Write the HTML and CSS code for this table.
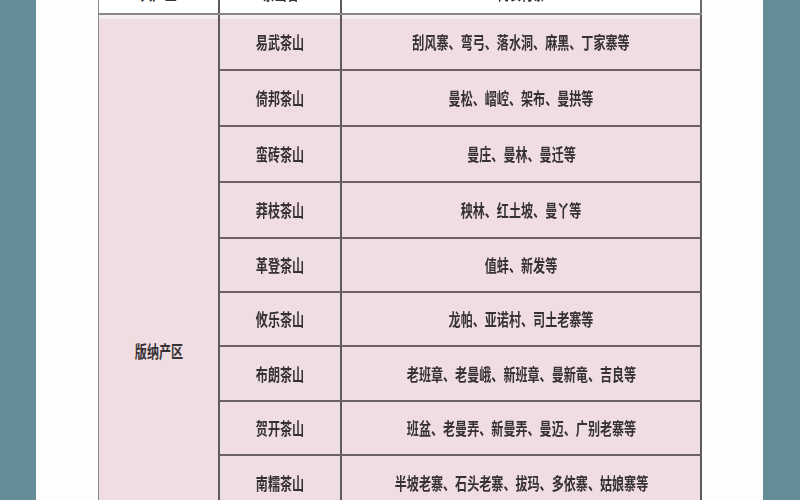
FILE: index.html
```html
<!DOCTYPE html>
<html lang="zh">
<head>
<meta charset="utf-8">
<title>版纳产区茶山</title>
<link rel="stylesheet" href="styles.css">
</head>
<body>
<div class="page">
  <table class="tea">
    <thead>
      <tr>
        <th class="c1"><span class="t">大产区</span></th>
        <th class="c2"><span class="t">茶山名</span></th>
        <th class="c3"><span class="t">代表村寨</span></th>
      </tr>
    </thead>
    <tbody>
      <tr class="first h56">
        <td class="region" rowspan="12"><span class="t">版纳产区</span></td>
        <td><span class="t">易武茶山</span></td>
        <td><span class="t">刮风寨、弯弓、落水洞、麻黑、丁家寨等</span></td>
      </tr>
      <tr class="h56">
        <td><span class="t">倚邦茶山</span></td>
        <td><span class="t">曼松、嶍崆、架布、曼拱等</span></td>
      </tr>
      <tr class="h56">
        <td><span class="t">蛮砖茶山</span></td>
        <td><span class="t">曼庄、曼林、曼迁等</span></td>
      </tr>
      <tr class="h56">
        <td><span class="t">莽枝茶山</span></td>
        <td><span class="t">秧林、红土坡、曼丫等</span></td>
      </tr>
      <tr class="h54">
        <td><span class="t">革登茶山</span></td>
        <td><span class="t">值蚌、新发等</span></td>
      </tr>
      <tr class="h54">
        <td><span class="t">攸乐茶山</span></td>
        <td><span class="t">龙帕、亚诺村、司土老寨等</span></td>
      </tr>
      <tr class="h55">
        <td><span class="t">布朗茶山</span></td>
        <td><span class="t">老班章、老曼峨、新班章、曼新竜、吉良等</span></td>
      </tr>
      <tr class="h54">
        <td><span class="t">贺开茶山</span></td>
        <td><span class="t">班盆、老曼弄、新曼弄、曼迈、广别老寨等</span></td>
      </tr>
      <tr class="h56">
        <td><span class="t">南糯茶山</span></td>
        <td><span class="t">半坡老寨、石头老寨、拔玛、多依寨、姑娘寨等</span></td>
      </tr>
      <tr class="h55">
        <td><span class="t">南峤茶山</span></td>
        <td><span class="t">曼糯、曼真等</span></td>
      </tr>
      <tr class="h55">
        <td><span class="t">勐宋茶山</span></td>
        <td><span class="t">那卡、保塘、坝檬等</span></td>
      </tr>
      <tr class="h55">
        <td><span class="t">巴达茶山</span></td>
        <td><span class="t">章朗、曼迈等</span></td>
      </tr>
    </tbody>
  </table>
</div>
</body>
</html>
```

FILE: styles.css
```css
html, body {
  margin: 0;
  padding: 0;
}

body {
  background: #638c96;
  width: 800px;
  height: 500px;
  overflow: hidden;
  font-family: "Noto Sans CJK SC", "Noto Sans", sans-serif;
}

.page {
  margin: 0 37px 0 36px;
  height: 500px;
  overflow: hidden;
  background: #fdfdfb;
  padding: 0 61px 0 62px;
}

.tea {
  width: 604px;
  border-collapse: collapse;
  table-layout: fixed;
  margin-top: -27px;
  filter: blur(0.6px);
}

.tea th,
.tea td {
  border-left: 2px solid #5e5a5c;
  border-right: 2px solid #5e5a5c;
  text-align: center;
  vertical-align: middle;
  padding: 0;
  color: #363234;
  font-size: 17px;
  font-weight: 700;
  line-height: 20px;
}

.tea th {
  height: 40px;
  background: #ffffff;
  border-bottom: 2px solid #8a8587;
}

.tea th.c1 { width: 119px; border-left-color: #8a8a8a; border-left-width: 1px; }
.tea th.c2 { width: 120px; }
.tea th.c3 { border-right-color: #6a6a6a; }

.tea td {
  background: #f0dde2;
  border-bottom: 2px solid #6b6064;
}

.tea tr.h56 td { height: 54px; }
.tea tr.h55 td { height: 53px; }
.tea tr.h54 td { height: 52px; }

.tea td.region {
  border-left: 1px solid #8a8a8a;
  padding-top: 12px;
}

.tea tr.first td {
  box-shadow: inset 0 4px 0 #f6eef0;
}

.t {
  display: inline-block;
  transform: scaleX(0.71);
  white-space: nowrap;
}
```
